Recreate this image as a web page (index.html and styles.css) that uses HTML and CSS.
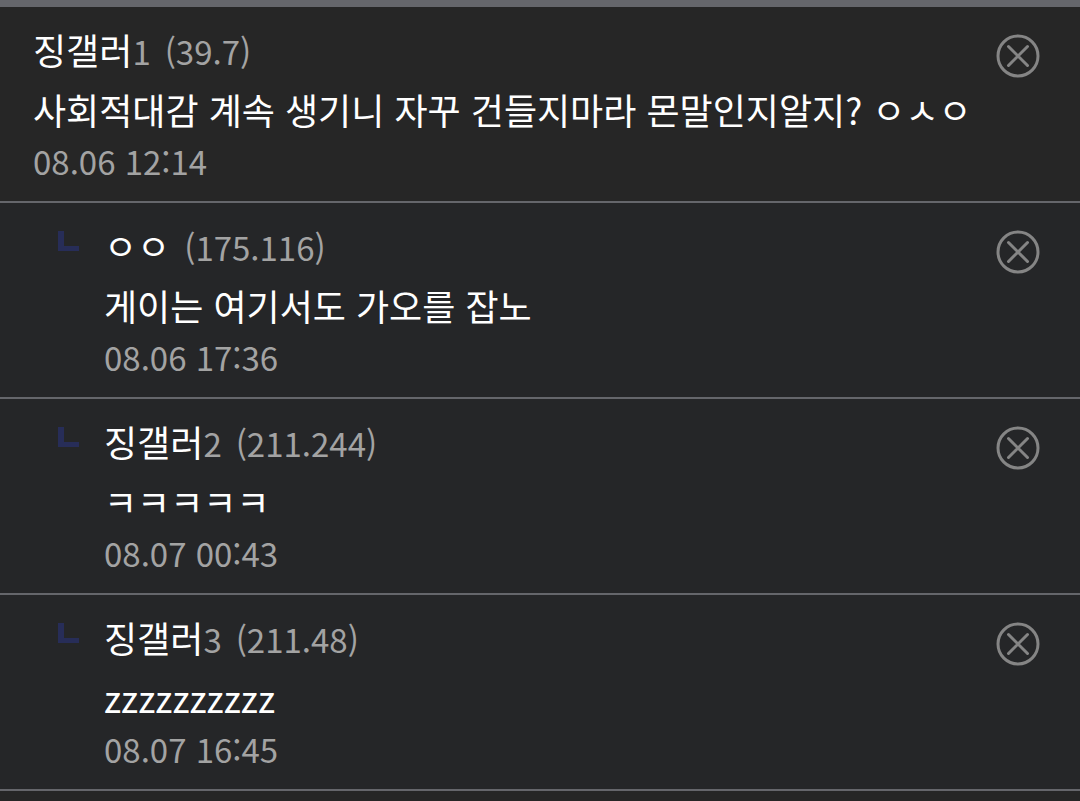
FILE: index.html
```
<!DOCTYPE html>
<html lang="ko">
<head>
  <meta charset="UTF-8" />
  <meta name="viewport" content="width=device-width, initial-scale=1.0" />
  <title>댓글</title>
  <link rel="stylesheet" href="styles.css">
</head>
<body>
  <svg class="symbols" aria-hidden="true">
    <symbol id="icon-close" viewBox="0 0 44 44">
      <circle cx="22" cy="22" r="20" />
      <path d="M12.5 12.5L31.5 31.5M31.5 12.5L12.5 31.5" />
    </symbol>
  </svg>

  <ul class="comment-list">
    <li class="comment">
      <div class="comment-body">
        <div class="writer"><span class="nick">징갤러</span><span class="num">1</span><span class="ip">(39.7)</span></div>
        <p class="text">사회적대감 계속 생기니 자꾸 건들지마라 몬말인지알지? ㅇㅅㅇ</p>
        <time class="date">08.06 12:14</time>
      </div>
      <button class="delete" type="button" aria-label="삭제"><svg><use href="#icon-close" /></svg></button>
    </li>

    <li class="comment reply">
      <div class="comment-body">
        <div class="writer"><span class="nick">ㅇㅇ</span><span class="ip">(175.116)</span></div>
        <p class="text">게이는 여기서도 가오를 잡노</p>
        <time class="date">08.06 17:36</time>
      </div>
      <button class="delete" type="button" aria-label="삭제"><svg><use href="#icon-close" /></svg></button>
    </li>

    <li class="comment reply">
      <div class="comment-body">
        <div class="writer"><span class="nick">징갤러</span><span class="num">2</span><span class="ip">(211.244)</span></div>
        <p class="text">ㅋㅋㅋㅋㅋ</p>
        <time class="date">08.07 00:43</time>
      </div>
      <button class="delete" type="button" aria-label="삭제"><svg><use href="#icon-close" /></svg></button>
    </li>

    <li class="comment reply">
      <div class="comment-body">
        <div class="writer"><span class="nick">징갤러</span><span class="num">3</span><span class="ip">(211.48)</span></div>
        <p class="text">zzzzzzzzzz</p>
        <time class="date">08.07 16:45</time>
      </div>
      <button class="delete" type="button" aria-label="삭제"><svg><use href="#icon-close" /></svg></button>
    </li>
  </ul>
</body>
</html>
```
FILE: styles.css
```
:root {
  --line: #65666b;
  --muted: #a3a3a3;
}

body {
  margin: 0;
  background: #262626;
  color: #fff;
  font-family: "Noto Sans CJK KR", sans-serif;
  font-size: 36px;
  line-height: 52px;
}

.symbols {
  display: none;
}

.comment-list {
  list-style: none;
  margin: 0;
  padding: 0;
  border-top: 7px solid var(--line);
}

.comment {
  display: flex;
  align-items: flex-start;
  padding: 16px 40px 14px 33px;
  border-bottom: 2px solid var(--line);
}

.reply {
  padding-left: 58px;
  background: #252628;
}

/* ㄴ shaped reply mark */
.reply::before {
  content: "";
  flex: none;
  box-sizing: border-box;
  width: 21px;
  height: 20px;
  margin-top: 12px;
  margin-right: 25px;
  border-left: 6px solid #272d58;
  border-bottom: 5px solid #272d58;
}

.comment-body {
  flex: 1;
  min-width: 0;
}

.writer {
  display: flex;
  align-items: baseline;
  height: 52px;
  margin-bottom: 8px;
}

.num,
.ip,
.date {
  color: var(--muted);
  font-size: 33px;
}

.ip {
  margin-left: 14px;
}

.text {
  margin: 0;
}

.date {
  display: block;
}

.delete {
  flex: none;
  width: 44px;
  height: 44px;
  margin-top: 11px;
  padding: 0;
  border: 0;
  background: none;
  cursor: pointer;
}

.delete svg {
  display: block;
  width: 44px;
  height: 44px;
  fill: none;
  stroke: #858585;
  stroke-width: 3;
  stroke-linecap: round;
}
```
